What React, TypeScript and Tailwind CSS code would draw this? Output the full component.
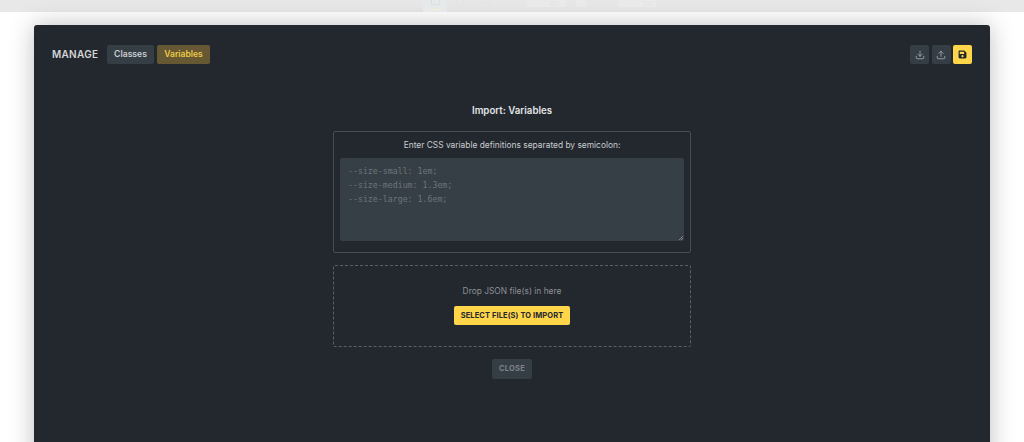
import { Download, Upload } from "lucide-react";

function FloppyIcon() {
  return (
    <svg width="9" height="9" viewBox="0 0 448 512" fill="#23282e">
      <path d="M64 32C28.7 32 0 60.7 0 96V416c0 35.3 28.7 64 64 64H384c35.3 0 64-28.7 64-64V173.3c0-17-6.7-33.300-18.700-45.300L352 50.700C340 38.700 323.700 32 306.700 32H64zm0 96c0-17.700 14.300-32 32-32H288c17.700 0 32 14.300 32 32v64c0 17.700-14.300 32-32 32H96c-17.700 0-32-14.300-32-32V128zM224 288a64 64 0 1 1 0 128 64 64 0 1 1 0-128z" />
    </svg>
  );
}

function TopBar() {
  return (
    <div className="flex h-3 items-start bg-[#e8e8e8] pl-[407px]">
      <span className="mt-[1px] h-[7px] w-[7px] rounded-full border border-[#e3e3e3]"></span>
      <div className="ml-[9px] flex h-3 w-6 flex-col items-center bg-[#e6e9ea]">
        <span className="h-[5px] w-[9px] border border-t-0 border-[#dedede]"></span>
        <span className="mt-1 h-[1px] w-3 bg-[#f4f0c8]"></span>
      </div>
      <span className="ml-[9px] h-[6px] w-2 border border-t-0 border-[#e3e3e3]"></span>
      <span className="ml-4 h-[3px] w-[10px] border border-t-0 border-[#e3e3e3]"></span>
      <span className="ml-[15px] h-[6px] w-[6px] border border-t-0 border-[#e3e3e3]"></span>
      <div className="ml-4 flex h-[7px] w-[39px] items-center justify-end rounded-b-[2px] bg-[#eaeaea] pr-[7px] text-[6px] leading-[6px] text-[#e3e3e3]">
        100
      </div>
      <span className="ml-[10px] h-[7px] w-[10px] rounded-b-[2px] bg-[#eaeaea]"></span>
      <span className="ml-[12px] mt-[4px] h-[1px] w-[2px] bg-[#e2e2e2]"></span>
      <div className="ml-[19px] flex h-[7px] w-[37px] items-center justify-end rounded-b-[2px] bg-[#eaeaea] pr-[3px] text-[6px] leading-[6px] text-[#e3e3e3]">
        100
      </div>
    </div>
  );
}

export default function App() {
  return (
    <div className="h-[442px] w-[1024px] overflow-hidden bg-white font-['Inter',sans-serif]">
      <TopBar />

      <div className="ml-[34px] mt-[13px] h-[500px] w-[956px] rounded-t-[3px] bg-[#23282e] px-[18px] pt-5 shadow-[0_0_24px_rgba(0,0,0,0.25)]">
        <div className="flex h-[19px] items-center">
          <h1 className="w-[47px] text-[10px] font-semibold tracking-[0.3px] text-[#d4d6d8]">MANAGE</h1>
          <button className="ml-2 h-[19px] w-[47px] rounded-[2px] bg-[#353d45] text-[8.6px] font-semibold text-[#cdd0d3]">
            Classes
          </button>
          <button className="ml-[3px] h-[19px] w-[53px] rounded-[2px] bg-[#665833] text-[8.5px] font-semibold text-[#eecb48]">
            Variables
          </button>
          <div className="ml-auto flex gap-[2.5px]">
            <button className="flex h-[19px] w-[19px] items-center justify-center rounded-[2px] bg-[#353d45] text-[#a4a9ad]">
              <Download size={10} />
            </button>
            <button className="flex h-[19px] w-[19px] items-center justify-center rounded-[2px] bg-[#353d45] text-[#a4a9ad]">
              <Upload size={10} />
            </button>
            <button className="flex h-[19px] w-[19px] items-center justify-center rounded-[2px] bg-[#ffd54a]">
              <FloppyIcon />
            </button>
          </div>
        </div>

        <div className="mx-auto mt-[41px] flex w-[358px] flex-col items-center">
          <h2 className="h-3 text-[9.7px] leading-3 font-semibold text-[#e2e4e6]">Import: Variables</h2>

          <div className="mt-[14px] h-[122px] w-full rounded-[2px] border-[1.5px] border-[#454c53] px-[6px] pt-2">
            <p className="text-center text-[8.4px] leading-[11px] text-[#c9ccd0]">
              Enter CSS variable definitions separated by semicolon:
            </p>
            <div className="relative mt-[6.5px]">
              <textarea
                readOnly
                className="block h-[83px] w-full resize-none rounded-[2px] bg-[#373f46] px-2 py-[6px] font-['DejaVu_Sans_Mono',monospace] text-[8.25px] leading-[14px] outline-none placeholder:text-[#6d747a]"
                placeholder={"--size-small: 1em;\n--size-medium: 1.3em;\n--size-large: 1.6em;"}
              ></textarea>
              <svg className="absolute right-[1px] bottom-[1px]" width="4" height="4" viewBox="0 0 4 4" stroke="#a0a4a8" strokeWidth="0.7">
                <path d="M0 4L4 0M2 4L4 2" />
              </svg>
            </div>
          </div>

          <div className="mt-3 flex h-[82px] w-full flex-col items-center rounded-[2px] border border-dashed border-[#5a6066] pt-5">
            <p className="text-[8.4px] leading-[11px] text-[#8d9195]">Drop JSON file(s) in here</p>
            <button className="mt-[9px] h-[19px] w-[116px] rounded-[2px] bg-[#ffd54a] text-[7.5px] font-bold tracking-[0.1px] text-[#23282e]">
              SELECT FILE(S) TO IMPORT
            </button>
          </div>

          <button className="mt-3 h-5 w-10 rounded-[2px] bg-[#353d45] text-[7.5px] font-bold tracking-[0.2px] text-[#7d8388]">
            CLOSE
          </button>
        </div>
      </div>
    </div>
  );
}
